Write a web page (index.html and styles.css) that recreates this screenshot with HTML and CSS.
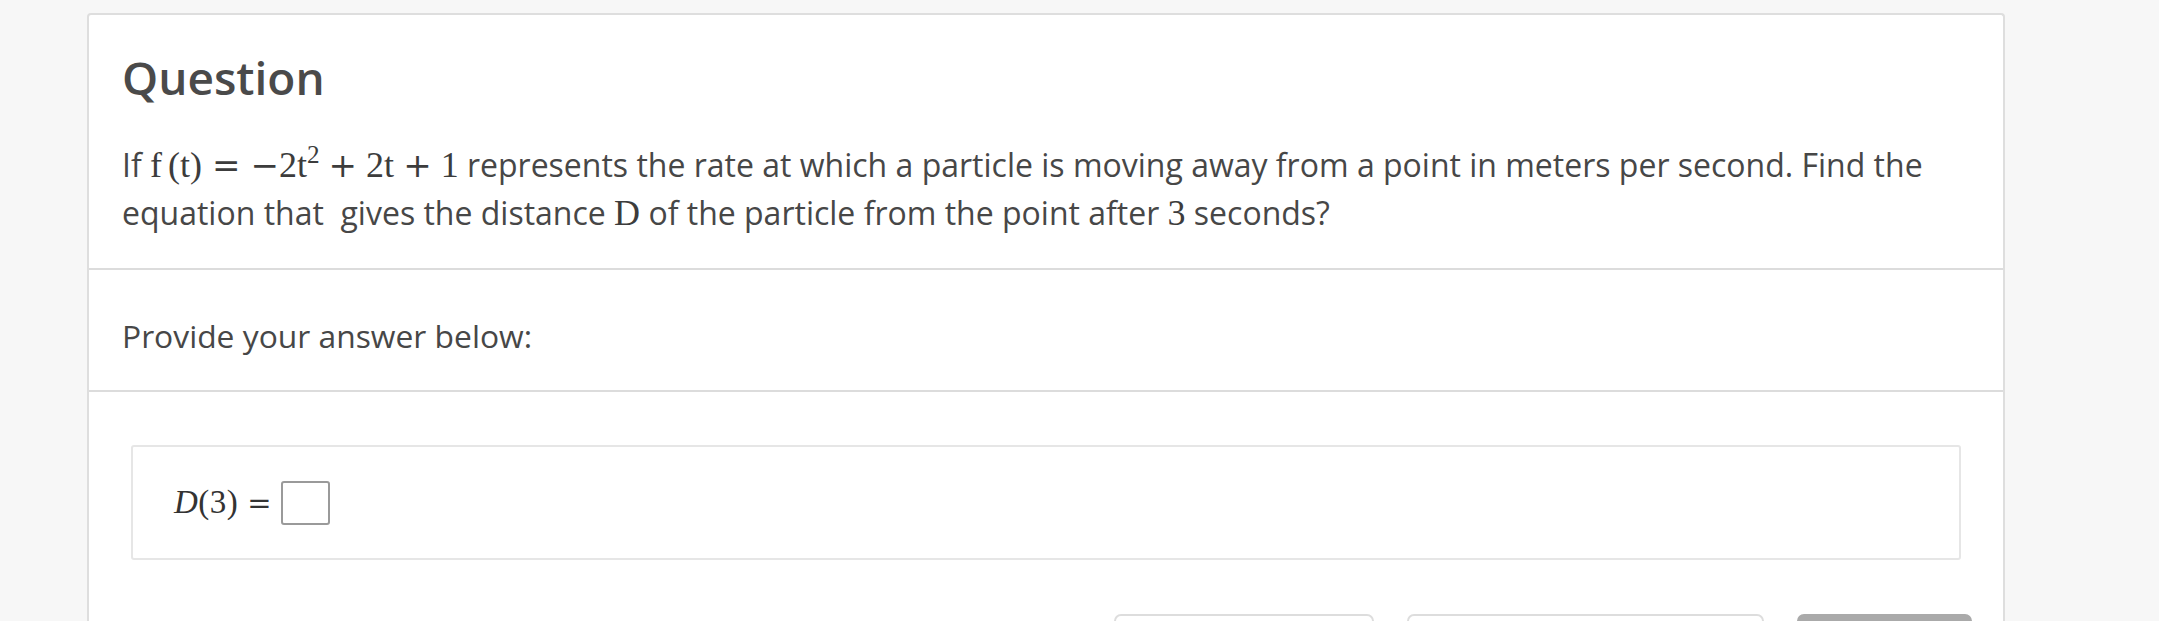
FILE: index.html
```html
<!DOCTYPE html>
<html lang="en">
<head>
<meta charset="utf-8">
<title>Question</title>
<link rel="stylesheet" href="styles.css">
</head>
<body>
<div class="page">
  <div class="card">
    <section class="sec sec-question">
      <h1 class="title">Question</h1>
      <p class="text">If <span class="m">f<span class="ap">(t)</span><span class="op rel">=</span><span class="op un">−</span>2t<sup>2</sup><span class="op bin">+</span>2t<span class="op bin">+</span>1</span> represents the rate at which a particle is moving away from a point in meters per second. Find the equation that&nbsp; gives the distance <span class="m">D</span> of the particle from the point after <span class="m">3</span> seconds?</p>
    </section>
    <section class="sec sec-prompt">
      <p class="text text-prompt">Provide your answer below:</p>
    </section>
    <section class="sec sec-answer">
      <div class="answer-box">
        <span class="expr"><i>D</i>(3)<span class="eq">=</span></span>
        <span class="blank"></span>
      </div>
      <div class="actions">
        <button class="btn btn-1" aria-label="Feedback"></button>
        <button class="btn btn-2" aria-label="Show answer"></button>
        <button class="btn btn-3" aria-label="Submit"></button>
      </div>
    </section>
  </div>
</div>
</body>
</html>
```
FILE: styles.css
```css
html, body {
  margin: 0;
  padding: 0;
  background: #f7f7f7;
  font-family: "Open Sans", "Liberation Sans", sans-serif;
  color: #484848;
  overflow: hidden;
}
.page {
  padding: 13px 0 0 87px;
}
.card {
  width: 1914px;
  background: #fff;
  border: 2px solid #dedede;
  border-bottom: none;
  border-radius: 4px 4px 0 0;
}
.sec {
  padding: 0 33px;
}
.sec-question {
  padding-top: 32px;
  padding-bottom: 31px;
  border-bottom: 2px solid #dcdcdc;
}
.title {
  margin: 0;
  font-size: 46px;
  line-height: 60px;
  font-weight: 600;
  color: #4a4a4a;
}
.text {
  margin: 0;
  font-size: 32px;
  line-height: 48px;
  font-weight: 400;
  color: #474747;
}
.text-prompt {
  font-size: 31.8px;
}
.sec-question .text {
  margin-top: 34px;
}
.m {
  font-family: "Liberation Serif", "Times New Roman", serif;
  font-size: 36px;
  line-height: 1;
  color: #3c3c3c;
}
.m .ap {
  margin-left: 6px;
}
.m .op {
  font-family: "DejaVu Serif", serif;
  font-size: 34px;
  line-height: 1;
}
.m .rel {
  margin: 0 10px;
}
.m .bin {
  margin: 0 9px;
}
.m sup {
  font-size: 0.7em;
  line-height: 0;
  vertical-align: 0.55em;
}
.sec-prompt {
  padding-top: 42px;
  padding-bottom: 30px;
  border-bottom: 2px solid #dcdcdc;
}
.sec-answer {
  padding: 53px 31px 0 42px;
}
.answer-box {
  display: flex;
  align-items: center;
  height: 111px;
  margin-right: 11px;
  padding-left: 41px;
  border: 2px solid #e6e6e6;
  border-radius: 3px;
}
.expr {
  font-family: "Liberation Serif", "Times New Roman", serif;
  font-size: 33px;
  color: #333;
  letter-spacing: 0.5px;
}
.expr i {
  font-style: italic;
}
.expr .eq {
  font-family: "DejaVu Serif", serif;
  font-size: 29px;
  margin-left: 9px;
}
.blank {
  display: block;
  width: 45px;
  height: 40px;
  margin-left: 9px;
  border: 2px solid #9a9a9a;
  border-radius: 3px;
}
.actions {
  display: flex;
  justify-content: flex-end;
  gap: 33px;
  margin-top: 54px;
}
.btn {
  display: block;
  height: 56px;
  padding: 0;
  border: 2px solid #dddddd;
  border-radius: 7px;
  background: #fff;
}
.btn-1 { width: 260px; }
.btn-2 { width: 357px; }
.btn-3 {
  width: 175px;
  background: #aaaaaa;
  border-color: #aaaaaa;
}
```
